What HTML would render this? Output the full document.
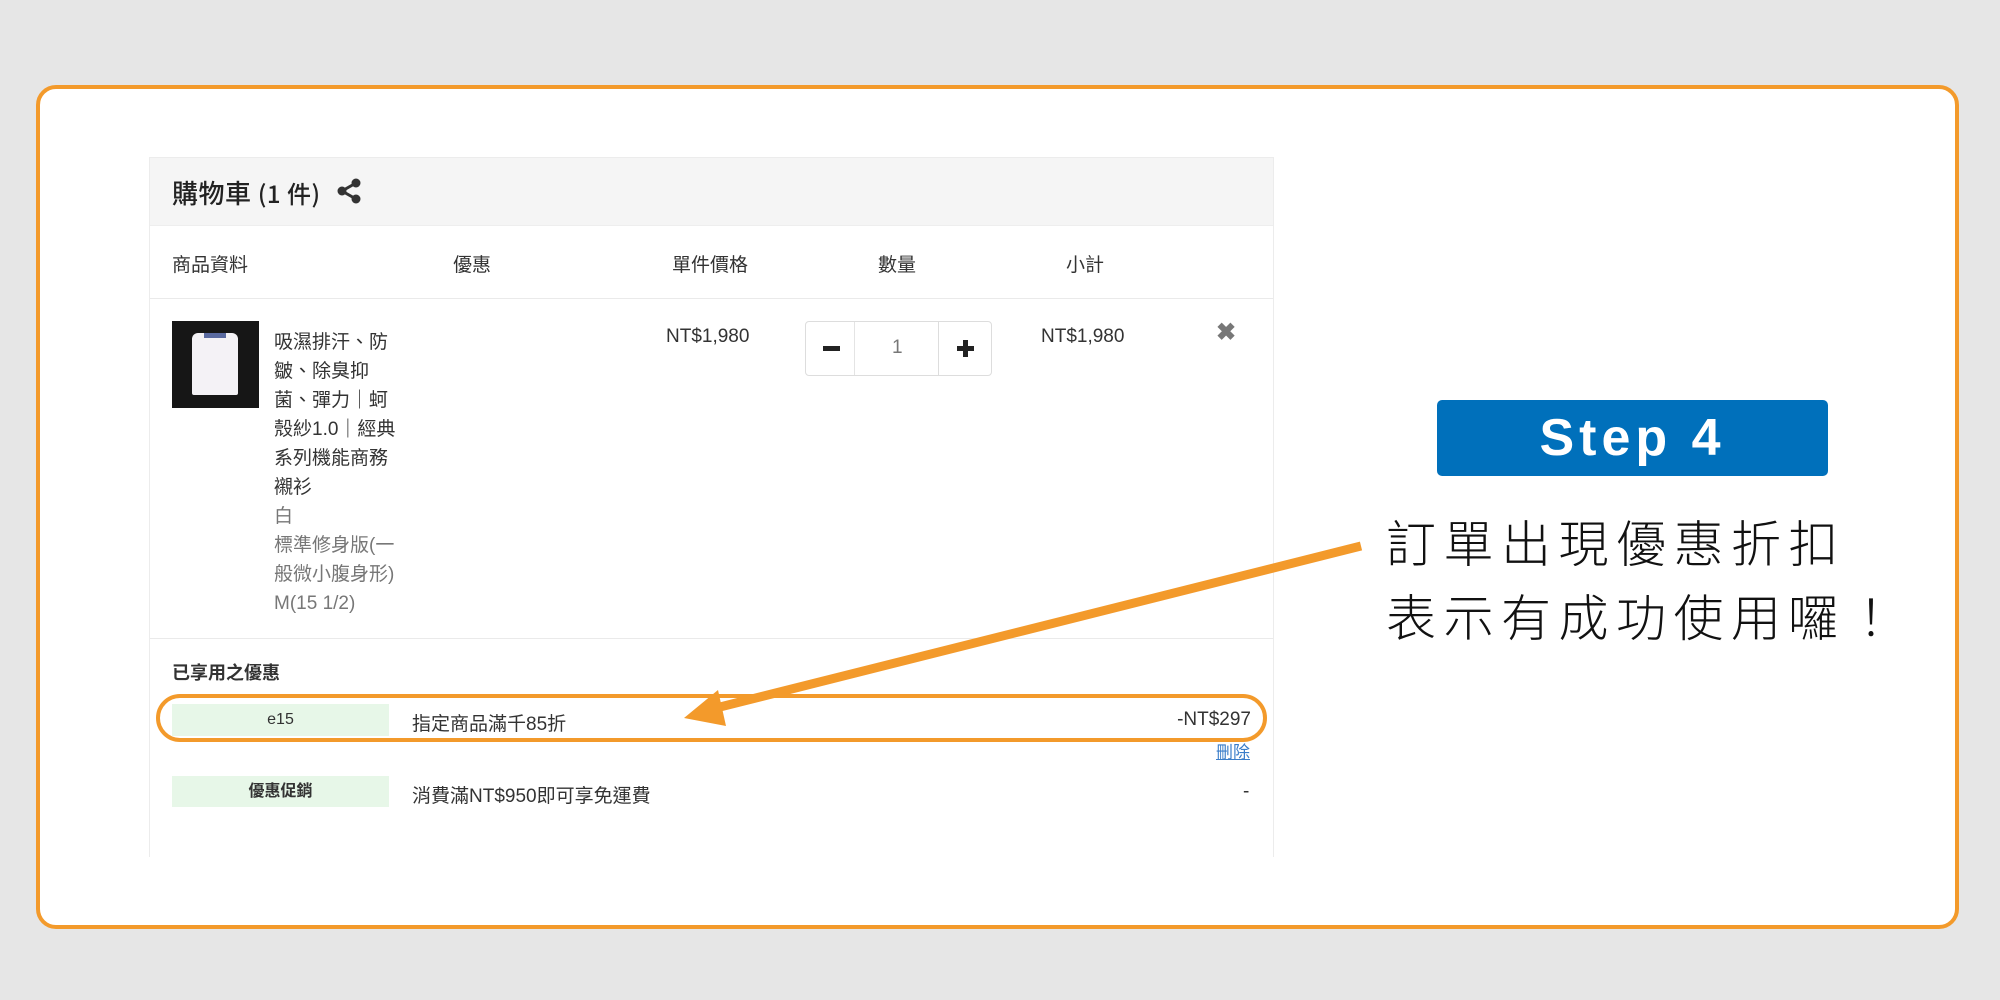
<!DOCTYPE html>
<html><head><meta charset="utf-8"><style>
*{margin:0;padding:0;box-sizing:border-box}
body{width:2000px;height:1000px;background:#e6e6e6;position:relative;overflow:hidden;font-family:"Liberation Sans","Noto Sans CJK TC",sans-serif;color:#333}
.a{position:absolute;white-space:nowrap}
#frame{position:absolute;left:36px;top:85px;width:1923px;height:844px;background:#fff;border:4px solid #f39a2b;border-radius:20px}
#panel{position:absolute;left:149px;top:157px;width:1125px;height:700px;border:1px solid #ececec;border-bottom:none;background:#fff}
.f19{font-size:19px}
.g{color:#777}
</style></head><body>
<div id="frame"></div>
<div id="panel"></div>
<div class="a" style="left:150px;top:158px;width:1123px;height:68px;background:#f5f5f5;border-bottom:1px solid #eee"></div>
<div class="a" style="left:172px;top:174px;font-size:26px;font-weight:500;color:#222;font-family:'Noto Sans CJK TC',sans-serif;letter-spacing:0.5px">購物車 <span style="font-size:24px">(1 件)</span></div>
<svg class="a" style="left:336px;top:178px" width="26" height="26" viewBox="0 0 26 26"><circle cx="20" cy="5" r="4.5" fill="#333"/><circle cx="6" cy="13" r="4.5" fill="#333"/><circle cx="20" cy="21" r="4.5" fill="#333"/><path d="M20 5L6 13L20 21" stroke="#333" stroke-width="3" fill="none"/></svg>
<div class="a f19" style="left:172px;top:250px">商品資料</div>
<div class="a f19" style="left:453px;top:250px">優惠</div>
<div class="a f19" style="left:672px;top:250px">單件價格</div>
<div class="a f19" style="left:878px;top:250px">數量</div>
<div class="a f19" style="left:1066px;top:250px">小計</div>
<div class="a" style="left:150px;top:298px;width:1123px;height:1px;background:#eaeaea"></div>
<div class="a" style="left:172px;top:321px;width:87px;height:87px;background:#161616"></div>
<div class="a" style="left:192px;top:333px;width:46px;height:62px;background:#f4f2f6;border-radius:6px 6px 2px 2px"></div>
<div class="a" style="left:204px;top:333px;width:22px;height:5px;background:#5a6aa0"></div>
<div class="a f19" style="left:274px;top:328px;line-height:29px;white-space:normal;width:140px">吸濕排汗、防<br>皺、除臭抑<br>菌、彈力｜蚵<br>殼紗1.0｜經典<br>系列機能商務<br>襯衫<br><span class="g">白<br>標準修身版(一<br>般微小腹身形)<br>M(15 1/2)</span></div>
<div class="a f19" style="left:666px;top:326px">NT$1,980</div>
<div class="a" style="left:805px;top:321px;width:187px;height:55px;border:1px solid #ddd;border-radius:4px"></div>
<div class="a" style="left:854px;top:322px;width:1px;height:53px;background:#e4e4e4"></div>
<div class="a" style="left:938px;top:322px;width:1px;height:53px;background:#ddd"></div>
<div class="a" style="left:823px;top:346px;width:17px;height:5px;background:#222"></div>
<div class="a f19 g" style="left:892px;top:337px">1</div>
<div class="a" style="left:957px;top:346px;width:17px;height:5px;background:#222"></div>
<div class="a" style="left:963px;top:340px;width:5px;height:17px;background:#222"></div>
<div class="a f19" style="left:1041px;top:326px">NT$1,980</div>
<div class="a" style="left:1216px;top:318px;font-size:24px;font-weight:bold;color:#777">✖</div>
<div class="a" style="left:150px;top:638px;width:1123px;height:1px;background:#eaeaea"></div>
<div class="a" style="left:172px;top:659px;font-size:18px;font-weight:bold;color:#333">已享用之優惠</div>
<div class="a" style="left:172px;top:704px;width:217px;height:32px;background:#e7f7e8;font-size:16px;text-align:center;line-height:32px">e15</div>
<div class="a f19" style="left:412px;top:709px">指定商品滿千85折</div>
<div class="a f19" style="left:1170px;top:709px;width:81px;text-align:right">-NT$297</div>
<div class="a" style="left:156px;top:694px;width:1111px;height:48px;border:4px solid #f39a2b;border-radius:24px"></div>
<div class="a" style="left:1216px;top:738px;font-size:17px;color:#3a7dc9;text-decoration:underline">刪除</div>
<div class="a" style="left:172px;top:776px;width:217px;height:31px;background:#e7f7e8;font-size:16px;font-weight:bold;text-align:center;line-height:31px">優惠促銷</div>
<div class="a f19" style="left:412px;top:781px">消費滿NT$950即可享免運費</div>
<div class="a f19" style="left:1243px;top:781px">-</div>
<svg class="a" style="left:0;top:0" width="2000" height="1000"><line x1="1361" y1="546" x2="712" y2="709" stroke="#f39a2b" stroke-width="9"/><polygon points="684,718 718,690 726,726" fill="#f39a2b"/></svg>
<div class="a" style="left:1437px;top:400px;width:391px;height:76px;background:#0070bb;border-radius:5px;color:#fff;font-size:52px;font-weight:bold;text-align:center;line-height:76px;letter-spacing:5px">Step 4</div>
<div class="a" style="left:1386px;top:504px;font-size:50px;line-height:74px;letter-spacing:7.5px;color:#111;font-family:'Noto Sans CJK TC',sans-serif;font-weight:300">訂單出現優惠折扣<br>表示有成功使用囉！</div>
</body></html>
